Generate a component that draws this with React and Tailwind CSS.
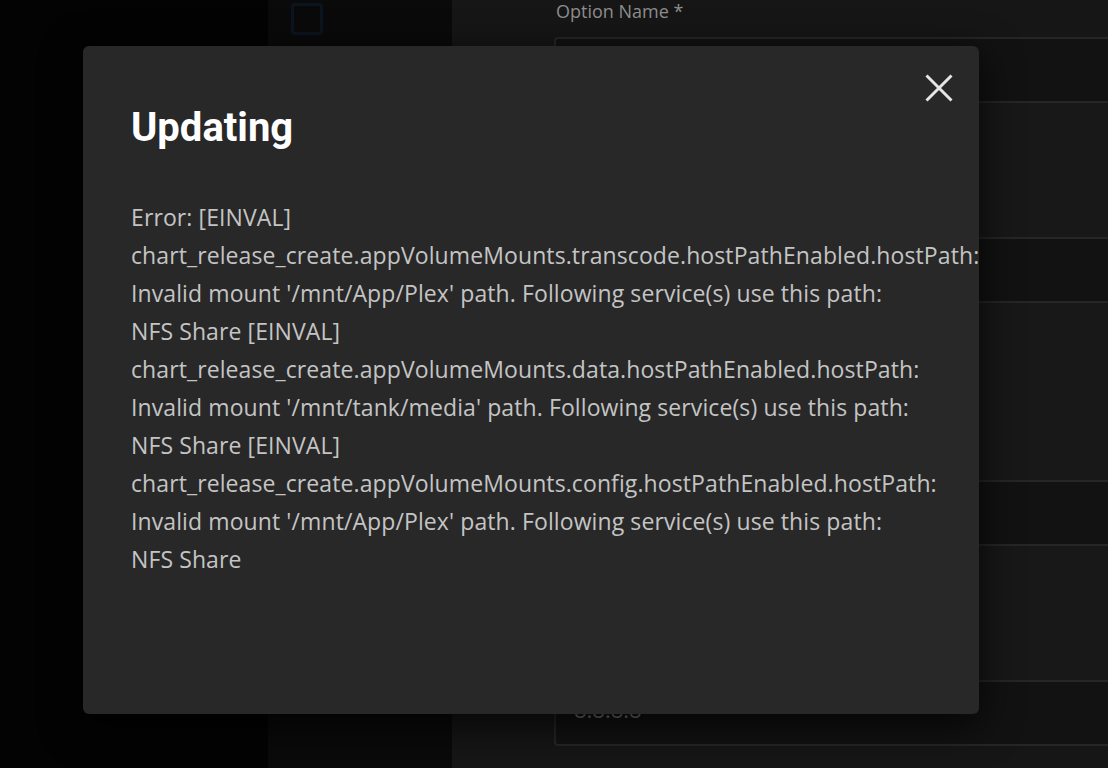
import React from "react";

const lines = [
  "Error: [EINVAL]",
  "chart_release_create.appVolumeMounts.transcode.hostPathEnabled.hostPath:",
  "Invalid mount '/mnt/App/Plex' path. Following service(s) use this path:",
  "NFS Share [EINVAL]",
  "chart_release_create.appVolumeMounts.data.hostPathEnabled.hostPath:",
  "Invalid mount '/mnt/tank/media' path. Following service(s) use this path:",
  "NFS Share [EINVAL]",
  "chart_release_create.appVolumeMounts.config.hostPathEnabled.hostPath:",
  "Invalid mount '/mnt/App/Plex' path. Following service(s) use this path:",
  "NFS Share",
];

function Field({ h, children }) {
  return (
    <div
      className={`border-2 border-r-0 border-[#262626] rounded-l-[4px] bg-[#121212] ${h}`}
    >
      {children}
    </div>
  );
}

export default function App() {
  return (
    <div
      className="relative w-[1108px] h-[768px] overflow-hidden flex bg-[#030303]"
      style={{ fontFamily: "'Open Sans', 'Noto Sans', sans-serif" }}
    >
      <div className="w-[268px] bg-[#030303]" />
      <div className="w-[184px] bg-[#0a0a0a] pl-[23px] pt-[3px]">
        <div className="w-[32px] h-[32px] border-[3px] border-[#0b1520] rounded-[4px]" />
      </div>
      <div className="flex-1 bg-[#161616] pl-[102px] flex flex-col">
        <div className="text-[18px] leading-[24px] text-[#8e8e8e] pl-[2px] mt-[-1px] h-[38px]">
          Option Name *
        </div>
        <Field h="h-[66px]" />
        <div className="h-[134px] bg-[#181818]" />
        <Field h="h-[66px]" />
        <div className="h-[177px] bg-[#181818]" />
        <Field h="h-[66px]" />
        <div className="h-[134px] bg-[#181818]" />
        <Field h="h-[66px]">
          <div className="text-[22px] text-[#7a7a7a] pl-[18px] pt-[11px]">8.8.8.8</div>
        </Field>
      </div>

      <div className="absolute left-[83px] top-[46px] w-[896px] h-[668px] bg-[#282828] rounded-[6px] shadow-[0_10px_40px_rgba(0,0,0,0.8)]">
        <div className="absolute right-[26px] top-[28px] w-[28px] h-[28px] text-[#e6e6e6]">
          <svg viewBox="0 0 28 28" width="28" height="28" fill="none" stroke="currentColor" strokeWidth="3">
            <path d="M1.5 1.5 L26.5 26.5 M26.5 1.5 L1.5 26.5" />
          </svg>
        </div>
        <div className="pl-[48px] pt-[58px]">
          <h1
            className="text-[40px] leading-[48px] font-bold text-white"
            style={{ fontFamily: "Roboto, 'Liberation Sans', sans-serif" }}
          >
            Updating
          </h1>
          <div className="mt-[46px] text-[23px] leading-[38px] tracking-[0.1px] text-[#c4c4c4]">
            {lines.map((l, i) => (
              <div key={i} className="whitespace-nowrap">
                {l}
              </div>
            ))}
          </div>
        </div>
      </div>
    </div>
  );
}
